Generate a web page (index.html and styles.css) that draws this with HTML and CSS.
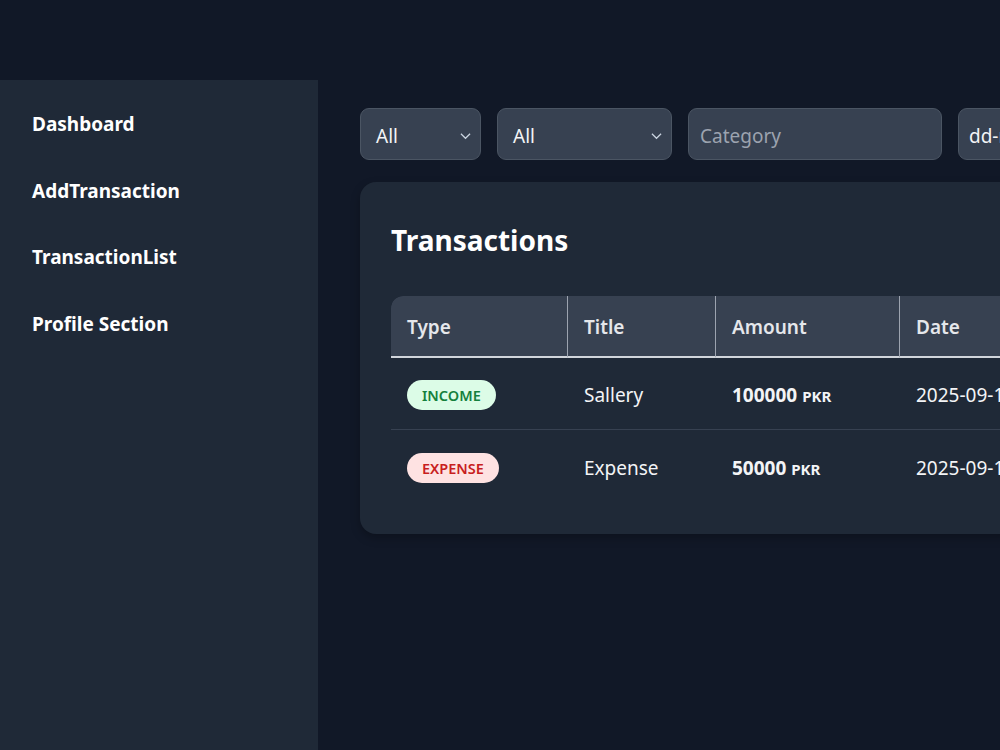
FILE: index.html
```html
<!DOCTYPE html>
<html lang="en">

<head>
    <meta charset="UTF-8">
    <meta name="viewport" content="width=device-width, initial-scale=1.0">
    <title>Transactions</title>
    <link rel="stylesheet" href="styles.css">
</head>

<body>
    <header class="topbar"></header>
    <div class="layout">
        <aside class="sidebar">
            <a href="#" class="nav-link">Dashboard</a>
            <a href="#" class="nav-link">AddTransaction</a>
            <a href="#" class="nav-link">TransactionList</a>
            <a href="#" class="nav-link">Profile Section</a>
        </aside>
        <main class="main">
            <div class="filters">
                <div class="select-box select-type">
                    <span>All</span>
                    <svg class="chevron" viewBox="0 0 12 8" width="11" height="8"><path d="M1 1.5 L6 6.5 L11 1.5" fill="none" stroke="#cbd5e1" stroke-width="1.3"/></svg>
                </div>
                <div class="select-box select-month">
                    <span>All</span>
                    <svg class="chevron" viewBox="0 0 12 8" width="11" height="8"><path d="M1 1.5 L6 6.5 L11 1.5" fill="none" stroke="#cbd5e1" stroke-width="1.3"/></svg>
                </div>
                <input class="field field-category" type="text" placeholder="Category">
                <div class="field field-date">dd-mm-yyyy</div>
            </div>

            <section class="card">
                <h2 class="card-title">Transactions</h2>
                <table class="tx-table">
                    <thead>
                        <tr>
                            <th class="col-type">Type</th>
                            <th class="col-title">Title</th>
                            <th class="col-amount">Amount</th>
                            <th class="col-date">Date</th>
                        </tr>
                    </thead>
                    <tbody>
                        <tr>
                            <td><span class="badge income">INCOME</span></td>
                            <td>Sallery</td>
                            <td class="amount">100000 <small>PKR</small></td>
                            <td>2025-09-14</td>
                        </tr>
                        <tr>
                            <td><span class="badge expense">EXPENSE</span></td>
                            <td>Expense</td>
                            <td class="amount">50000 <small>PKR</small></td>
                            <td>2025-09-14</td>
                        </tr>
                    </tbody>
                </table>
            </section>
        </main>
    </div>
</body>

</html>
```

FILE: styles.css
```css
body {
    margin: 0;
    font-family: 'Noto Sans', 'Open Sans', sans-serif;
    background: #111827;
    color: #f3f4f6;
    overflow: hidden;
    height: 750px;
}

.topbar {
    height: 80px;
    background: #111827;
}

.layout {
    display: flex;
    height: 670px;
}

.sidebar {
    width: 318px;
    flex-shrink: 0;
    background: #1f2937;
    display: flex;
    flex-direction: column;
    gap: 38.7px;
    padding: 30px 32px;
    box-sizing: border-box;
}

.nav-link {
    color: #ffffff;
    text-decoration: none;
    font-weight: 700;
    font-size: 19px;
    line-height: 28px;
}

.main {
    padding: 28px 0 0 42px;
    flex: 1;
    min-width: 0;
}

/* Filters row */
.filters {
    display: flex;
    gap: 16px;
    width: 900px;
}

.select-box,
.field {
    height: 52px;
    box-sizing: border-box;
    background: #374151;
    border: 1px solid #4b5563;
    border-radius: 9px;
    color: #f3f4f6;
    font-family: inherit;
    font-size: 19px;
    padding: 3px 15px 0;
    display: flex;
    align-items: center;
    flex-shrink: 0;
}

.select-box {
    justify-content: space-between;
    padding-right: 9px;
}

.select-type {
    width: 121px;
}

.select-month {
    width: 175px;
}

.field-category {
    width: 254px;
    padding-left: 11px;
    outline: none;
}

.field-category::placeholder {
    color: #9ca3af;
}

.field-date {
    width: 200px;
    padding-left: 10px;
}

/* Card */
.card {
    margin-top: 22px;
    width: 900px;
    background: #1f2937;
    border-radius: 16px;
    padding: 32px 31px;
    box-sizing: border-box;
    box-shadow: 0 4px 10px rgba(0, 0, 0, 0.25);
}

.card-title {
    margin: 0 0 30px;
    font-size: 28px;
    line-height: 52px;
    font-weight: 700;
    color: #ffffff;
}

.tx-table {
    border-collapse: separate;
    border-spacing: 0;
    width: 760px;
    font-size: 19px;
    border-radius: 12px;
    overflow: hidden;
}

.tx-table th {
    background: #374151;
    color: #e5e7eb;
    font-weight: 600;
    text-align: left;
    height: 62px;
    padding: 2px 16px 0;
    border-bottom: 2px solid #d1d5db;
    border-right: 1px solid #9ca3af;
    box-sizing: border-box;
}

.tx-table th:first-child {
    border-top-left-radius: 12px;
}

.tx-table th:last-child {
    border-right: none;
}

.col-type {
    width: 177px;
}

.col-title {
    width: 148px;
}

.col-amount {
    width: 184px;
}

.tx-table td {
    height: 72px;
    padding: 3px 16px 0;
    border-bottom: 1px solid #374151;
    color: #f3f4f6;
    white-space: nowrap;
    box-sizing: border-box;
}

.tx-table tbody tr:last-child td {
    border-bottom: none;
}

.amount {
    font-weight: 700;
}

.amount small {
    font-size: 15px;
}

.badge {
    display: inline-block;
    padding: 0 15px;
    height: 30px;
    line-height: 30px;
    border-radius: 15px;
    font-size: 14.5px;
    font-weight: 600;
}

.income {
    background: #dcfce7;
    color: #15803d;
}

.expense {
    background: #fee2e2;
    color: #c81e1e;
}
```
